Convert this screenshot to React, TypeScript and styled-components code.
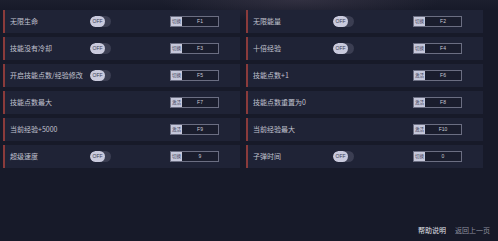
import React from "react";
import styled, { createGlobalStyle } from "styled-components";

const Global = createGlobalStyle`
  html, body { margin: 0; padding: 0; }
  body {
    background: #171a29;
    font-family: "Noto Sans CJK SC", "Noto Sans", sans-serif;
    width: 498px;
    height: 241px;
    overflow: hidden;
  }
`;

const Page = styled.div`
  position: relative;
  width: 498px;
  height: 241px;
  background:
    radial-gradient(ellipse 140px 22px at 300px 0px, rgba(90, 80, 100, 0.35), transparent),
    linear-gradient(#1c1f2e 0px, #171a29 10px, #171a29 100%);
  display: flex;
  flex-direction: column;
  box-sizing: border-box;
  padding: 10px 0 0 3px;
`;

const Grid = styled.div`
  display: grid;
  grid-template-columns: 237px 237px;
  column-gap: 6px;
  row-gap: 4px;
`;

const Card = styled.div`
  height: 23px;
  box-sizing: border-box;
  background: #1f2336;
  border-left: 2px solid #8a3b3b;
  display: grid;
  grid-template-columns: 80px 80px 50px;
  align-items: center;
  padding-left: 5px;
`;

const Label = styled.span`
  font-size: 7px;
  color: #c0c2cf;
  white-space: nowrap;
  line-height: 1;
`;

const Toggle = styled.div`
  width: 21px;
  height: 11px;
  border-radius: 6px;
  background: #3b3e52;
  display: flex;
  align-items: center;
  overflow: hidden;
`;

const ToggleKnob = styled.span`
  width: 15px;
  height: 11px;
  border-radius: 6px;
  background: #c9cadd;
  color: #3a3d55;
  font-size: 5px;
  font-family: "Liberation Sans", sans-serif;
  display: flex;
  align-items: center;
  justify-content: center;
  line-height: 1;
`;

const Hotkey = styled.div`
  grid-column: 3;
  width: 49px;
  height: 11px;
  box-sizing: border-box;
  border: 1px solid #6b6e82;
  background: #1a1d2d;
  display: flex;
  align-items: stretch;
`;

const KeyTag = styled.span`
  width: 11px;
  background: #c6c8db;
  color: #3c3f58;
  font-size: 4.5px;
  display: flex;
  align-items: center;
  justify-content: center;
  line-height: 1;
`;

const KeyValue = styled.span`
  flex: 1;
  color: #c8cad6;
  font-size: 5px;
  font-family: "Liberation Sans", sans-serif;
  display: flex;
  align-items: center;
  justify-content: center;
  line-height: 1;
`;

const Footer = styled.div`
  margin-top: auto;
  display: flex;
  justify-content: flex-end;
  gap: 9px;
  padding: 0 8px 7px 0;
`;

const FooterLink = styled.span<{ $dim?: boolean }>`
  font-size: 7px;
  color: ${(p) => (p.$dim ? "#8e909f" : "#e2e3ea")};
  line-height: 1;
`;

type Item = { label: string; toggle: boolean; key: string };

const items: Item[] = [
  { label: "无限生命", toggle: true, key: "F1" },
  { label: "无限能量", toggle: true, key: "F2" },
  { label: "技能没有冷却", toggle: true, key: "F3" },
  { label: "十倍经验", toggle: true, key: "F4" },
  { label: "开启技能点数/经验修改", toggle: true, key: "F5" },
  { label: "技能点数+1", toggle: false, key: "F6" },
  { label: "技能点数最大", toggle: false, key: "F7" },
  { label: "技能点数重置为0", toggle: false, key: "F8" },
  { label: "当前经验+5000", toggle: false, key: "F9" },
  { label: "当前经验最大", toggle: false, key: "F10" },
  { label: "超级速度", toggle: true, key: "9" },
  { label: "子弹时间", toggle: true, key: "0" },
];

export default function App() {
  return (
    <Page>
      <Global />
      <Grid>
        {items.map((it) => (
          <Card key={it.label}>
            <Label>{it.label}</Label>
            {it.toggle ? (
              <Toggle>
                <ToggleKnob>OFF</ToggleKnob>
              </Toggle>
            ) : null}
            <Hotkey>
              <KeyTag>{it.toggle ? "切换" : "激活"}</KeyTag>
              <KeyValue>{it.key}</KeyValue>
            </Hotkey>
          </Card>
        ))}
      </Grid>
      <Footer>
        <FooterLink>帮助说明</FooterLink>
        <FooterLink $dim>返回上一页</FooterLink>
      </Footer>
    </Page>
  );
}
